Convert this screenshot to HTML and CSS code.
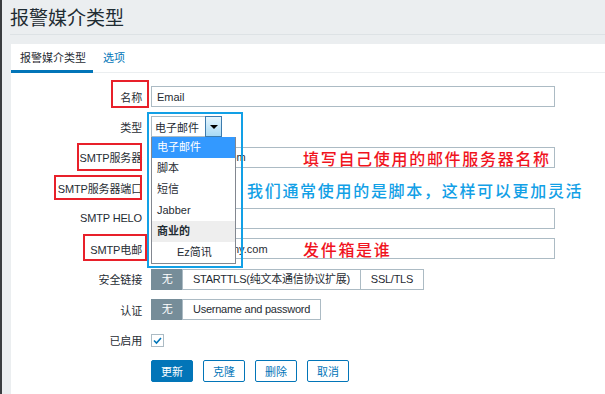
FILE: index.html
```html
<!DOCTYPE html>
<html lang="zh-CN">
<head>
  <meta charset="UTF-8">
  <title>报警媒介类型</title>
  <link rel="stylesheet" href="styles.css">
</head>
<body>

  <div class="page-header">
    <h1>报警媒介类型</h1>
  </div>

  <div class="panel">
    <ul class="tabs">
      <li class="active">报警媒介类型</li>
      <li>选项</li>
    </ul>

    <form class="form">
      <label>名称</label>
      <div><input class="text" type="text" value="Email"></div>

      <label>类型</label>
      <div>
        <div class="combo">
          <span>电子邮件</span>
          <span class="combo-btn"><i></i></span>
        </div>
      </div>

      <label>SMTP服务器</label>
      <div><input class="text" type="text" value="smtp.mailbox.com"></div>

      <label>SMTP服务器端口</label>
      <div><input class="text short" type="text" value="25"></div>

      <label>SMTP HELO</label>
      <div><input class="text" type="text" value="mailbox.com"></div>

      <label>SMTP电邮</label>
      <div><input class="text" type="text" value="zabbix@company.com"></div>

      <label>安全链接</label>
      <div class="segmented">
        <span class="on">无</span>
        <span>STARTTLS(纯文本通信协议扩展)</span>
        <span>SSL/TLS</span>
      </div>

      <label>认证</label>
      <div class="segmented">
        <span class="on">无</span>
        <span>Username and password</span>
      </div>

      <label>已启用</label>
      <div>
        <span class="checkbox">
          <svg width="11" height="11" viewBox="0 0 11 11"><path d="M2 5.5 L4.5 8 L9 3" fill="none" stroke="#0275b8" stroke-width="1.6"/></svg>
        </span>
      </div>

      <span></span>
      <div class="buttons">
        <button type="button" class="btn primary">更新</button>
        <button type="button" class="btn">克隆</button>
        <button type="button" class="btn">删除</button>
        <button type="button" class="btn">取消</button>
      </div>
    </form>

    <!-- open dropdown of the type select -->
    <ul class="dropdown">
      <li class="hover">电子邮件</li>
      <li>脚本</li>
      <li>短信</li>
      <li>Jabber</li>
      <li class="group">商业的</li>
      <li class="sub">Ez简讯</li>
    </ul>

    <!-- annotations drawn over the screenshot -->
    <div class="mark mark-name"></div>
    <div class="mark mark-server"></div>
    <div class="mark mark-port"></div>
    <div class="mark mark-email"></div>
    <div class="mark-blue"></div>

    <div class="note note-server">填写自己使用的邮件服务器名称</div>
    <div class="note note-script">我们通常使用的是脚本，这样可以更加灵活</div>
    <div class="note note-email">发件箱是谁</div>
  </div>

</body>
</html>
```

FILE: styles.css
```css
* {
  box-sizing: border-box;
}
body {
  margin: 0;
  background: #ebeef0;
  border-left: 2px solid #3a3d40;
  min-height: 394px;
  overflow: hidden;
  font-family: 'Liberation Sans', 'Noto Sans CJK SC', sans-serif;
  font-size: 11px;
  color: #1f2c33;
}
.page-header {
  margin-left: 8px;
  height: 35px;
  border-bottom: 1px solid #dde2e5;
}
.page-header h1 {
  margin: 0;
  font-family: 'Noto Sans CJK SC', sans-serif;
  font-size: 19px;
  font-weight: normal;
  line-height: 34px;
}
.panel {
  position: relative;
  margin: 9px 0 0 9px;
  background: #fff;
  height: 360px;
}
.tabs {
  list-style: none;
  margin: 0;
  padding: 0;
  display: flex;
  height: 29px;
  border-bottom: 1px solid #ebeef0;
}
.tabs li {
  padding: 0 10px;
  line-height: 26px;
  color: #0275b8;
  font-family: 'Noto Sans CJK SC', sans-serif;
}
.tabs li.active {
  padding: 0 7px 0 9px;
  color: #1f2c33;
  border-bottom: 3px solid #0275b8;
  height: 29px;
}
.form {
  display: grid;
  grid-template-columns: 131px 1fr;
  grid-auto-rows: 21px;
  column-gap: 9px;
  row-gap: 9.44px;
  align-items: center;
  padding-top: 13px;
}
.form label {
  text-align: right;
  letter-spacing: -0.15px;
}
.text {
  display: block;
  width: 404px;
  height: 21px;
  border: 1px solid #acbbc4;
  padding: 0 5px;
  font: inherit;
  color: #1f2c33;
  background: #fff;
}
.text.short {
  width: 60px;
}
.combo {
  display: flex;
  width: 71px;
  height: 21px;
  border: 1px solid #acbbc4;
  align-items: center;
  justify-content: space-between;
  padding-left: 3px;
}
.combo-btn {
  width: 17px;
  height: 21px;
  margin: -1px -1px -1px 0;
  border: 1px solid #3d7bad;
  background: linear-gradient(#e6f5fd, #a8daf6);
  display: flex;
  align-items: center;
  justify-content: center;
}
.combo-btn i {
  border-left: 4px solid transparent;
  border-right: 4px solid transparent;
  border-top: 4px solid #000;
}
.segmented {
  display: flex;
  height: 21px;
}
.segmented span {
  border: 1px solid #acbbc4;
  margin-left: -1px;
  padding: 0 10px;
  line-height: 19px;
  white-space: nowrap;
  letter-spacing: -0.25px;
}
.segmented span:first-child {
  margin-left: 0;
}
.segmented span.on {
  background: #768d99;
  border-color: #768d99;
  color: #fff;
  width: 32px;
  text-align: center;
  padding: 0;
}
.checkbox {
  display: flex;
  width: 13px;
  height: 13px;
  border: 1px solid #acbbc4;
  align-items: center;
  justify-content: center;
}
.buttons {
  display: flex;
  gap: 10px;
  align-self: start;
}
.btn {
  width: 42px;
  height: 22px;
  border: 1px solid #0275b8;
  border-radius: 2px;
  background: #fff;
  color: #0275b8;
  font: inherit;
  padding: 0;
}
.btn.primary {
  background: #0275b8;
  color: #fff;
}
.dropdown {
  position: absolute;
  left: 140px;
  top: 93px;
  width: 85px;
  margin: 0;
  padding: 0;
  list-style: none;
  background: #fff;
  border: 1px solid #828790;
  border-top: 0;
}
.dropdown li {
  height: 21px;
  line-height: 21px;
  padding-left: 5px;
}
.dropdown li.hover {
  background: #3399ff;
  color: #fff;
}
.dropdown li.group {
  background: #eeeeee;
  font-weight: bold;
}
.dropdown li.sub {
  padding-left: 25px;
}
.mark {
  position: absolute;
  border: 2px solid #e8202a;
}
.mark-name {
  left: 100px;
  top: 36px;
  width: 38px;
  height: 28px;
}
.mark-server {
  left: 66px;
  top: 99px;
  width: 65px;
  height: 28px;
}
.mark-port {
  left: 43px;
  top: 131px;
  width: 88px;
  height: 25px;
}
.mark-email {
  left: 72px;
  top: 190px;
  width: 64px;
  height: 27px;
}
.mark-blue {
  position: absolute;
  left: 136px;
  top: 68px;
  width: 96px;
  height: 156px;
  border: 2px solid #12a0e6;
}
.note {
  position: absolute;
  font-family: 'Noto Sans CJK SC', sans-serif;
  font-size: 16px;
  font-weight: 500;
  line-height: 20px;
  letter-spacing: 1.7px;
  white-space: nowrap;
}
.note-server {
  left: 292px;
  top: 104px;
  color: #f0141e;
}
.note-script {
  left: 236px;
  top: 136px;
  color: #12a0e6;
}
.note-email {
  left: 292px;
  top: 195px;
  color: #f0141e;
}
```
